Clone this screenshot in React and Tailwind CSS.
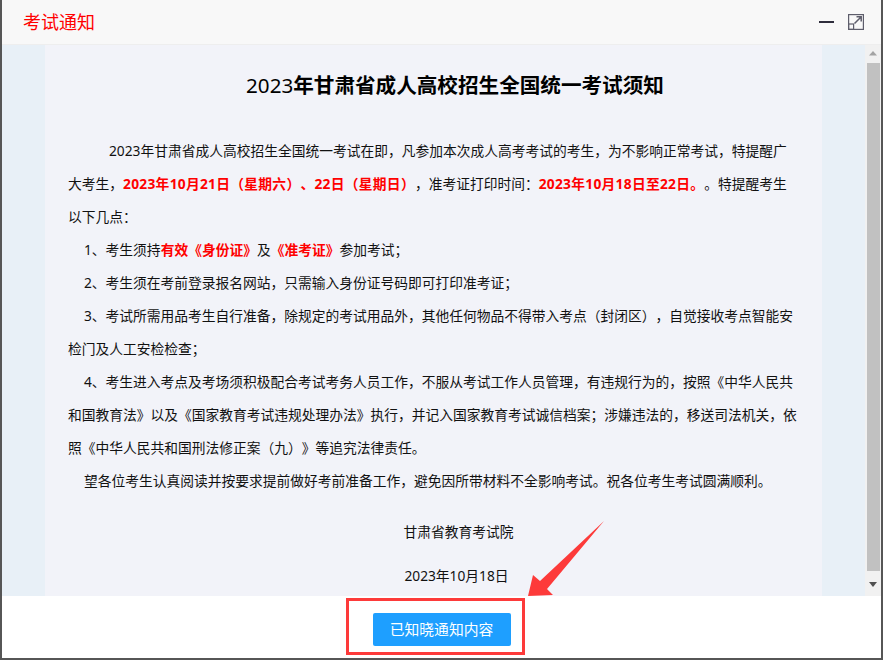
const Red = ({ children }) => <strong className="font-bold text-[#ff0000]">{children}</strong>;
const RedDate = ({ children }) => <strong className="font-bold tracking-[0.28px] text-[#ff0000]">{children}</strong>;

export default function App() {
  return (
    <div className="relative flex h-[660px] w-[883px] flex-col overflow-hidden border-x-2 border-b-2 border-[#565656] bg-white font-['Noto_Sans','Noto_Sans_CJK_SC',sans-serif] text-[13.75px] text-[#111] [text-spacing-trim:space-all]">
      {/* Header */}
      <div className="flex h-[45px] shrink-0 items-center justify-between border-b border-[#eeeeee] bg-[#f8f8f8] pl-[21px] pr-[17px]">
        <span className="text-[18px] leading-none text-[#ff0000]">考试通知</span>
        <div className="flex items-center gap-[14px]">
          <span className="h-[2px] w-[15px] bg-[#2e2d3c]" />
          <svg width="16" height="16" viewBox="0 0 16 16" fill="none" stroke="#5d5d6b" strokeWidth="1.2">
            <rect x="0.6" y="0.6" width="14.8" height="14.8" />
            <rect x="0.6" y="10" width="5" height="5.4" />
            <path d="M6.5 9.5 13 3M8.5 2.8H13.2V7.5" strokeWidth="1.5" />
          </svg>
        </div>
      </div>

      {/* Notice */}
      <div className="flex min-h-0 flex-1">
        <div className="flex-1 bg-[#e8f0f7] px-[43px]">
          <div className="h-full overflow-hidden whitespace-nowrap bg-[#f2f3f9] pl-[23px]">
            <h1 className="pl-[20px] pt-[24px] pb-[33px] text-center text-[20.6px] font-bold leading-[32px] text-black">
              <span className="font-normal">2023</span>年甘肃省成人高校招生全国统一考试须知
            </h1>
            <div className="leading-[33px]">
              <p className="indent-[41px]">
                2023年甘肃省成人高校招生全国统一考试在即，凡参加本次成人高考考试的考生，为不影响正常考试，特提醒广<br />
                大考生，<RedDate>2023年10月21日（星期六）、22日（星期日）</RedDate>，准考证打印时间：<RedDate>2023年10月18日至22日。</RedDate>。特提醒考生<br />
                以下几点：
              </p>
              <p className="indent-[16px]">1、考生须持<Red>有效《身份证》</Red>及<Red>《准考证》</Red>参加考试；</p>
              <p className="indent-[16px]">2、考生须在考前登录报名网站，只需输入身份证号码即可打印准考证；</p>
              <p className="indent-[16px]">3、考试所需用品考生自行准备，除规定的考试用品外，其他任何物品不得带入考点（封闭区），自觉接收考点智能安<br />检门及人工安检检查；</p>
              <p className="indent-[16px]">4、考生进入考点及考场须积极配合考试考务人员工作，不服从考试工作人员管理，有违规行为的，按照《中华人民共<br />和国教育法》以及《国家教育考试违规处理办法》执行，并记入国家教育考试诚信档案；涉嫌违法的，移送司法机关，依<br />照《中华人民共和国刑法修正案（九）》等追究法律责任。</p>
              <p className="indent-[16px]">望各位考生认真阅读并按要求提前做好考前准备工作，避免因所带材料不全影响考试。祝各位考生考试圆满顺利。</p>
              <p className="pl-[27px] pt-[18px] text-center">甘肃省教育考试院</p>
              <p className="pl-[23px] pt-[11px] text-center">2023年10月18日</p>
            </div>
          </div>
        </div>

        {/* Scrollbar */}
        <div className="flex w-[16px] shrink-0 flex-col items-center bg-[#f1f1f1]">
          <svg width="8" height="18" viewBox="0 0 8 18" className="shrink-0" fill="#a3a3a3"><path d="M4 6 8 10.5H0Z" /></svg>
          <div className="w-[13px] flex-1 bg-[#c1c1c1]" />
          <svg width="8" height="25" viewBox="0 0 8 25" className="shrink-0" fill="#505050"><path d="M0 11H8L4 16Z" /></svg>
        </div>
      </div>

      {/* Footer */}
      <div className="flex h-[62px] shrink-0 items-start justify-center bg-white pt-[17px]">
        <button className="h-[33px] w-[138px] rounded-[2px] bg-[#1e9fff] text-[14.8px] text-white">已知晓通知内容</button>
      </div>

      {/* Annotation over the screenshot */}
      <div className="absolute left-[344px] top-[598px] h-[57px] w-[179px] border-[3px] border-[#fd3a3a]" />
      <svg className="absolute left-[-2px] top-0" width="883" height="660" fill="#fd3a3a">
        <path d="M604 521 547 589 553 595 528 596 533 575 540 581Z" />
      </svg>
    </div>
  );
}
